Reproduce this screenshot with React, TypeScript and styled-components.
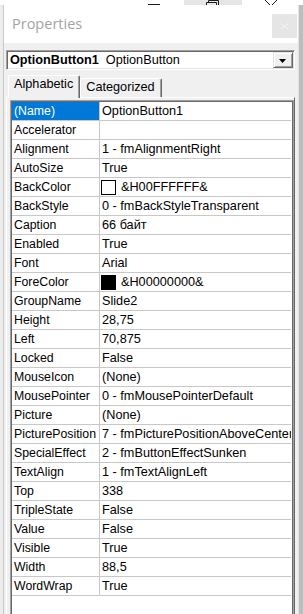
import React from 'react'
import styled, { createGlobalStyle } from 'styled-components'

type Property = {
  name: string
  value: string
  swatch?: string
}

const properties: Property[] = [
  { name: '(Name)', value: 'OptionButton1' },
  { name: 'Accelerator', value: '' },
  { name: 'Alignment', value: '1 - fmAlignmentRight' },
  { name: 'AutoSize', value: 'True' },
  { name: 'BackColor', value: '&H00FFFFFF&', swatch: '#ffffff' },
  { name: 'BackStyle', value: '0 - fmBackStyleTransparent' },
  { name: 'Caption', value: '66 байт' },
  { name: 'Enabled', value: 'True' },
  { name: 'Font', value: 'Arial' },
  { name: 'ForeColor', value: '&H00000000&', swatch: '#000000' },
  { name: 'GroupName', value: 'Slide2' },
  { name: 'Height', value: '28,75' },
  { name: 'Left', value: '70,875' },
  { name: 'Locked', value: 'False' },
  { name: 'MouseIcon', value: '(None)' },
  { name: 'MousePointer', value: '0 - fmMousePointerDefault' },
  { name: 'Picture', value: '(None)' },
  { name: 'PicturePosition', value: '7 - fmPicturePositionAboveCenter' },
  { name: 'SpecialEffect', value: '2 - fmButtonEffectSunken' },
  { name: 'TextAlign', value: '1 - fmTextAlignLeft' },
  { name: 'Top', value: '338' },
  { name: 'TripleState', value: 'False' },
  { name: 'Value', value: 'False' },
  { name: 'Visible', value: 'True' },
  { name: 'Width', value: '88,5' },
  { name: 'WordWrap', value: 'True' },
]

function App() {
  return (
    <>
      <GlobalStyle />
      <Screen>
        {/* caption buttons of the Excel window behind, mostly hidden */}
        <HostCaption>
          <CaptionButton>
            <svg width="58" height="5">
              <line x1="22" y1="4.5" x2="34" y2="4.5" stroke="#1a1a1a" strokeWidth="1" />
            </svg>
          </CaptionButton>
          <CaptionButton $hover>
            <svg width="58" height="5">
              <path d="M22.5 5 V2.5 H32.5 V5" fill="none" stroke="#1a1a1a" />
              <path d="M24.5 2.5 V0.5 H34.5 V5" fill="none" stroke="#1a1a1a" />
            </svg>
          </CaptionButton>
          <CaptionButton>
            <svg width="58" height="5">
              <path d="M23 0 L28.5 5.5 M35 0 L29.5 5.5" fill="none" stroke="#1a1a1a" />
            </svg>
          </CaptionButton>
        </HostCaption>

        <Desk>
          <LeftEdge />
          <Window>
            <TitleBar>
              <Title>Properties</Title>
              <CloseButton>
                <svg width="9" height="7">
                  <path d="M0.5 0.5 L8.5 6.5 M8.5 0.5 L0.5 6.5" stroke="#f6f6f6" fill="none" />
                </svg>
              </CloseButton>
            </TitleBar>

            <Body>
              <Combo>
                <ComboText>
                  <b>OptionButton1</b>
                  <ComboType>OptionButton</ComboType>
                </ComboText>
                <DropButton>
                  <svg width="8" height="4">
                    <path d="M0 0 H7 L3.5 4 Z" fill="#000" />
                  </svg>
                </DropButton>
              </Combo>

              <Tabs>
                <Tab $active>Alphabetic</Tab>
                <Tab>Categorized</Tab>
              </Tabs>

              <Panel>
                <Grid>
                  {properties.map((p, i) => (
                    <Row key={p.name}>
                      <NameCell $selected={i === 0}>{p.name}</NameCell>
                      <ValueCell>
                        {p.swatch && <Swatch $color={p.swatch} />}
                        {p.value}
                      </ValueCell>
                    </Row>
                  ))}
                </Grid>
              </Panel>
            </Body>
          </Window>
          <RightEdge />
        </Desk>
      </Screen>
    </>
  )
}

export default App

const GlobalStyle = createGlobalStyle`
  html, body {
    margin: 0;
    padding: 0;
  }
  body {
    background: #ffffff;
    font-family: "Liberation Sans", Arial, sans-serif;
    overflow: hidden;
  }
`

const Screen = styled.div`
  width: 303px;
  height: 614px;
  display: flex;
  flex-direction: column;
  overflow: hidden;
  background: #ffffff;
`

const HostCaption = styled.div`
  height: 5px;
  flex: none;
  display: flex;
  justify-content: flex-end;
  padding-right: 3px;
  overflow: hidden;
  background: #ffffff;
`

const CaptionButton = styled.div<{ $hover?: boolean }>`
  width: 58px;
  height: 5px;
  background: ${(p) => (p.$hover ? '#e5e5e5' : 'transparent')};
  svg {
    display: block;
  }
`

const Desk = styled.div`
  flex: 1;
  min-height: 0;
  display: flex;
`

const LeftEdge = styled.div`
  width: 3px;
  background: #ededed;
`

const RightEdge = styled.div`
  width: 4px;
  border-left: 1px solid #e2e2e2;
  background: #bdbdbd;
`

const Window = styled.div`
  flex: 1;
  min-width: 0;
  display: flex;
  flex-direction: column;
  border-left: 1px solid #c8c8c8;
  background: #f0f0f0;
`

const TitleBar = styled.div`
  height: 38px;
  flex: none;
  display: flex;
  justify-content: space-between;
  align-items: flex-start;
  background: #ffffff;
  padding-right: 1px;
`

const Title = styled.div`
  margin: 9px 0 0 8px;
  font-family: "Open Sans", "Noto Sans", sans-serif;
  font-size: 14.5px;
  line-height: 20px;
  color: #a3a3a3;
`

const CloseButton = styled.div`
  width: 25px;
  height: 24px;
  margin-top: 9px;
  display: flex;
  align-items: center;
  justify-content: center;
  background: #e5e5e5;
`

const Body = styled.div`
  flex: 1;
  min-height: 0;
  display: flex;
  flex-direction: column;
  padding: 7px 3px 0 2px;
`

const Combo = styled.div`
  height: 20px;
  box-sizing: border-box;
  flex: none;
  display: flex;
  align-items: center;
  padding: 1px;
  border: 1px solid;
  border-color: #a0a0a0 #ffffff #ffffff #a0a0a0;
  box-shadow: inset 1px 1px 0 #696969, inset -1px -1px 0 #e3e3e3;
  background: #ffffff;
`

const ComboText = styled.div`
  flex: 1;
  padding-left: 2px;
  font-size: 12.7px;
  line-height: 16px;
  color: #000000;
  white-space: nowrap;
  overflow: hidden;
`

const ComboType = styled.span`
  margin-left: 7px;
`

const DropButton = styled.div`
  width: 20px;
  height: 16px;
  box-sizing: border-box;
  display: flex;
  align-items: center;
  justify-content: center;
  background: #f0f0f0;
  border: 1px solid;
  border-color: #e3e3e3 #696969 #696969 #e3e3e3;
  box-shadow: inset 1px 1px 0 #ffffff, inset -1px -1px 0 #a0a0a0;
  svg {
    display: block;
    margin-top: 1px;
  }
`

const Tabs = styled.div`
  height: 22px;
  flex: none;
  margin-top: 5px;
  padding-left: 2px;
  display: flex;
  align-items: flex-end;
`

const Tab = styled.div<{ $active?: boolean }>`
  position: relative;
  z-index: ${(p) => (p.$active ? 1 : 0)};
  box-sizing: border-box;
  height: ${(p) => (p.$active ? '23px' : '19px')};
  margin-bottom: ${(p) => (p.$active ? '-1px' : '0')};
  padding: 1px 6px 0 5px;
  border: 1px solid;
  border-bottom: none;
  border-color: #ffffff #696969 transparent #ffffff;
  border-radius: 2px 2px 0 0;
  box-shadow: inset -1px 0 0 #a0a0a0;
  background: #f0f0f0;
  font-size: 12.7px;
  line-height: 15px;
  color: #000000;
  white-space: nowrap;
`

const Panel = styled.div`
  flex: 1;
  min-height: 0;
  display: flex;
  flex-direction: column;
  border-top: 1px solid #ffffff;
  border-left: 1px solid #ffffff;
  border-right: 1px solid #696969;
  padding: 2px 0 0 3px;
`

const Grid = styled.div`
  flex: 1;
  min-height: 0;
  padding: 1px;
  border: 1px solid #a0a0a0;
  border-bottom: none;
  box-shadow: inset 1px 1px 0 #696969, inset -1px 0 0 #696969;
  background: #ffffff;
  overflow: hidden;
`

const Row = styled.div`
  height: 19px;
  box-sizing: border-box;
  display: grid;
  grid-template-columns: 88px 1fr;
  border-bottom: 1px solid #c8c8c8;
  margin-right: 1px;
  font-size: 12.7px;
  line-height: 18px;
`

const NameCell = styled.div<{ $selected?: boolean }>`
  padding-left: 2px;
  border-right: 1px solid #c8c8c8;
  background: ${(p) => (p.$selected ? '#0078d7' : 'transparent')};
  color: ${(p) => (p.$selected ? '#ffffff' : '#000000')};
  font-size: 12.3px;
  white-space: nowrap;
  overflow: hidden;
`

const ValueCell = styled.div`
  display: flex;
  align-items: center;
  padding-left: 2px;
  color: #000000;
  white-space: nowrap;
  overflow: hidden;
`

const Swatch = styled.span<{ $color: string }>`
  flex: none;
  width: 15px;
  height: 15px;
  box-sizing: border-box;
  margin: 0 5px 0 -1px;
  border: 1px solid #000000;
  background: ${(p) => p.$color};
`
